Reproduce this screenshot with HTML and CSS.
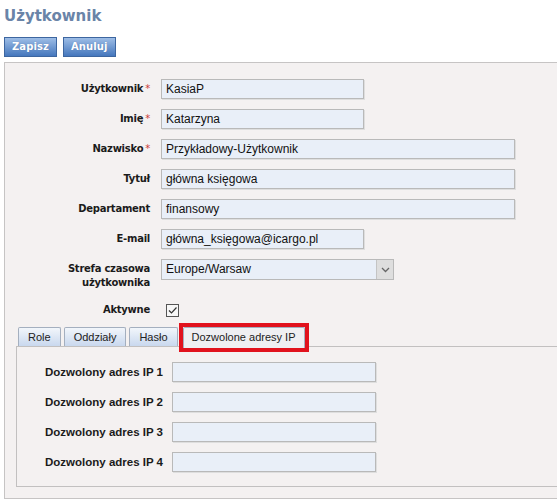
FILE: index.html
```html
<!DOCTYPE html>
<html lang="pl">
<head>
<meta charset="utf-8">
<title>Użytkownik</title>
<link rel="stylesheet" href="styles.css">
</head>
<body>
<h1 class="title">Użytkownik</h1>
<div class="toolbar">
  <button class="btn">Zapisz</button>
  <button class="btn">Anuluj</button>
</div>
<div class="panel">
  <div class="form">
    <div class="lbl">Użytkownik<span class="req">*</span></div>
    <div class="inp short">KasiaP</div>

    <div class="lbl">Imię<span class="req">*</span></div>
    <div class="inp short">Katarzyna</div>

    <div class="lbl">Nazwisko<span class="req">*</span></div>
    <div class="inp long">Przykładowy-Użytkownik</div>

    <div class="lbl">Tytuł</div>
    <div class="inp long">główna księgowa</div>

    <div class="lbl">Departament</div>
    <div class="inp long">finansowy</div>

    <div class="lbl">E-mail</div>
    <div class="inp short">główna_księgowa@icargo.pl</div>

    <div class="lbl lbl-multi">Strefa czasowa<br>użytkownika</div>
    <div class="select-cell">
      <div class="select">
        <span class="select-text">Europe/Warsaw</span>
        <span class="select-btn">
          <svg width="9" height="6" viewBox="0 0 9 6"><path d="M1 1 L4.5 4.5 L8 1" fill="none" stroke="#666" stroke-width="1.3"/></svg>
        </span>
      </div>
    </div>

    <div class="lbl">Aktywne</div>
    <div class="check-cell">
      <span class="checkbox">
        <svg width="11" height="11" viewBox="0 0 11 11"><path d="M2 5.5 L4.5 8 L9.5 2.5" fill="none" stroke="#333" stroke-width="1.2"/></svg>
      </span>
    </div>
  </div>

  <div class="tabs">
    <div class="tab">Role</div>
    <div class="tab">Oddziały</div>
    <div class="tab">Hasło</div>
    <div class="tab active">Dozwolone adresy IP</div>
  </div>
  <div class="tabpanel">
    <div class="ipgrid">
      <div class="iplbl">Dozwolony adres IP 1</div><div class="inp ip"></div>
      <div class="iplbl">Dozwolony adres IP 2</div><div class="inp ip"></div>
      <div class="iplbl">Dozwolony adres IP 3</div><div class="inp ip"></div>
      <div class="iplbl">Dozwolony adres IP 4</div><div class="inp ip"></div>
    </div>
  </div>
</div>
</body>
</html>
```
FILE: styles.css
```css
html, body {
  margin: 0;
  padding: 0;
  background: #ffffff;
  font-family: "DejaVu Sans", Verdana, sans-serif;
  overflow: hidden;
}

.title {
  margin: 0;
  padding: 7px 0 0 4px;
  height: 22px;
  font: bold 15px/18px "DejaVu Sans", Verdana, sans-serif;
  color: #6a84a8;
}

.toolbar {
  display: flex;
  gap: 6px;
  padding: 8px 0 0 4px;
}

.btn {
  height: 20px;
  padding: 0 7px;
  border: 1px solid #3d66a0;
  background: linear-gradient(#9dbde6, #4577bd);
  color: #ffffff;
  font: bold 10px/18px "DejaVu Sans", Verdana, sans-serif;
  letter-spacing: 0.1px;
  text-shadow: 0 0 1px rgba(30, 60, 110, 0.4);
}

.panel {
  margin: 5px 0 0 4px;
  border: 1px solid #c6c4c4;
  border-right: none;
  background: #f4f1f1;
  padding: 16px 0 11px 0;
}

.form {
  display: grid;
  grid-template-columns: 145px auto;
  column-gap: 11px;
  row-gap: 10px;
  align-items: center;
}

.lbl {
  text-align: right;
  font: bold 10px/14px "DejaVu Sans", Verdana, sans-serif;
  letter-spacing: -0.25px;
  color: #1b1b1b;
}

.lbl-multi {
  align-self: start;
  padding: 3px 0 3px 0;
}

.req {
  color: #cc3a3a;
  margin-left: 2px;
  font-weight: normal;
}

.inp {
  box-sizing: border-box;
  height: 20px;
  border: 1px solid #b9b9b9;
  box-shadow: 1px 1px 0 #dedede;
  background: #e9eff8;
  font: 12px/18px "Liberation Sans", Arial, sans-serif;
  color: #111111;
  padding: 0 4px;
  white-space: nowrap;
}

.short { width: 203px; }
.long { width: 354px; }

.select-cell {
  align-self: start;
}

.select {
  box-sizing: border-box;
  width: 233px;
  height: 21px;
  display: flex;
  border: 1px solid #b9b9b9;
  background: #e9eff8;
}

.select-text {
  flex: 1;
  padding: 0 4px;
  font: 12px/19px "Liberation Sans", Arial, sans-serif;
  color: #111111;
}

.select-btn {
  width: 16px;
  display: flex;
  align-items: center;
  justify-content: center;
  background: #dedede;
  border-left: 1px solid #c4c4c4;
}

.check-cell {
  display: flex;
  padding-left: 5px;
}

.checkbox {
  box-sizing: border-box;
  width: 13px;
  height: 13px;
  border: 1px solid #555555;
  background: #f7f7f7;
  display: flex;
  align-items: center;
  justify-content: center;
}

.tabs {
  display: flex;
  align-items: flex-end;
  height: 19px;
  margin: 10px 0 0 12px;
  position: relative;
  z-index: 1;
}

.tab {
  box-sizing: border-box;
  height: 19px;
  margin-left: 1px;
  margin-right: 2px;
  padding: 0 9px;
  border: 1px solid #a4afbf;
  border-bottom: none;
  border-radius: 2px 2px 0 0;
  background: linear-gradient(#f2f6fb, #c9d8ee);
  font: 11px/18px "Liberation Sans", Arial, sans-serif;
  color: #222222;
}

.tab.active {
  position: relative;
  height: 21px;
  margin-left: 3px;
  margin-bottom: -2px;
  padding: 0 8px;
  background: #efeff2;
  line-height: 19px;
}

.tab.active::after {
  content: "";
  position: absolute;
  left: -5px;
  right: -5px;
  top: -5px;
  bottom: -4px;
  border: 4px solid #e1121d;
}

.tabpanel {
  margin-left: 11px;
  border: 1px solid #c2c0c0;
  border-right: none;
  padding: 15px 0 14px 28px;
}

.ipgrid {
  display: grid;
  grid-template-columns: 127px auto;
  row-gap: 10px;
  align-items: center;
}

.iplbl {
  font: bold 11.5px/14px "Liberation Sans", Arial, sans-serif;
  color: #1b1b1b;
}

.ip {
  width: 204px;
}
```
